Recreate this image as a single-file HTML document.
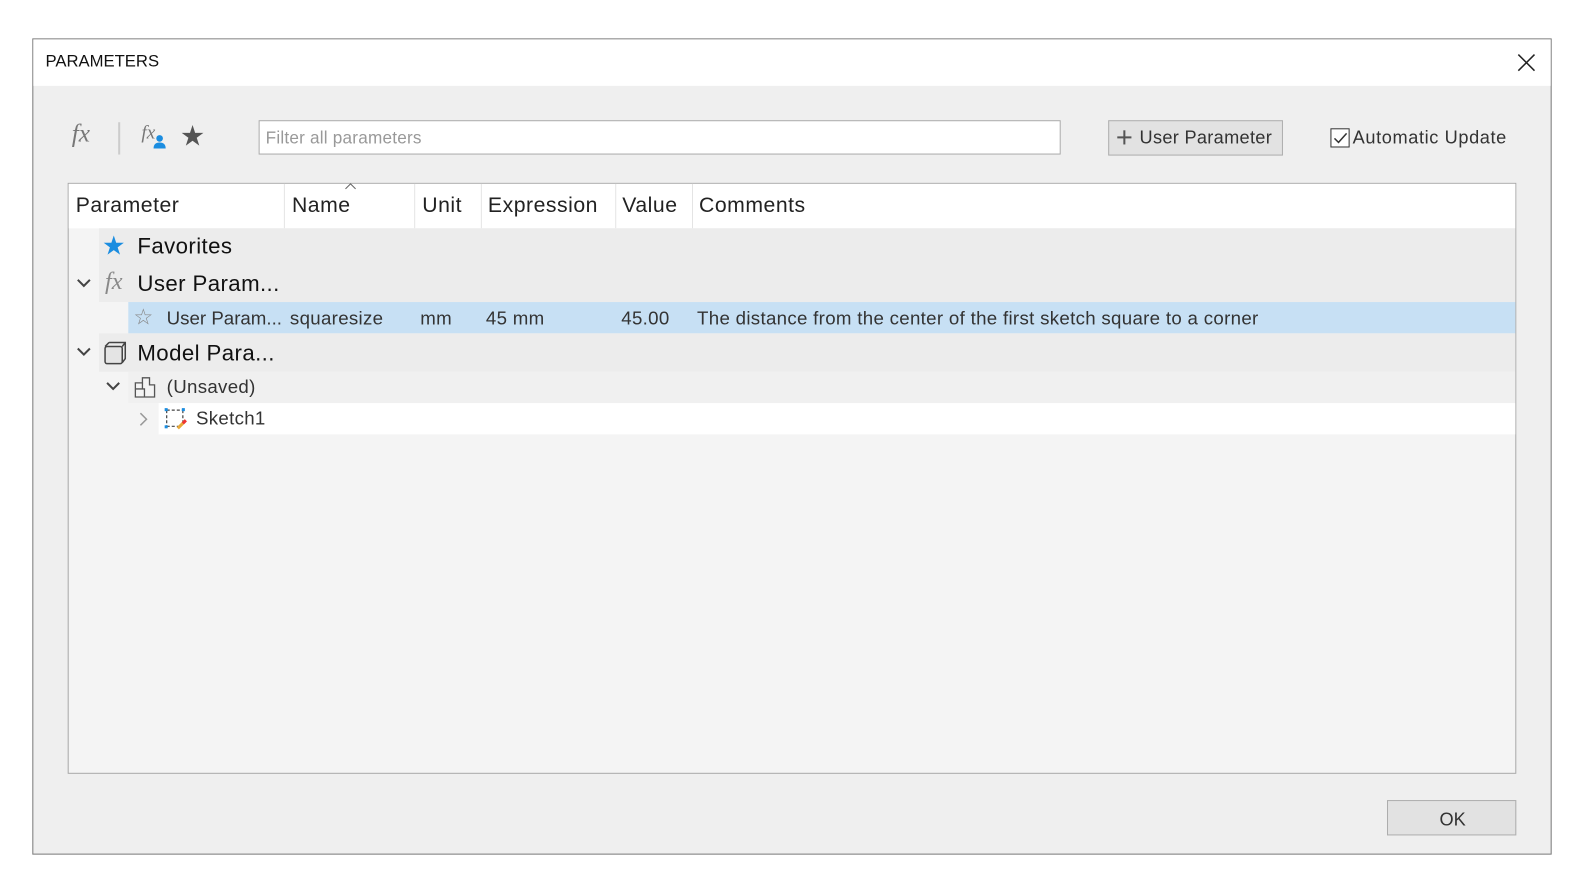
<!DOCTYPE html>
<html><head><style>
*{box-sizing:border-box;margin:0;padding:0}
html,body{width:1584px;height:886px;overflow:hidden;background:#fff}
#w{position:relative;width:1584px;height:886px;overflow:hidden;font-family:"Liberation Sans","DejaVu Sans",sans-serif;color:#222;transform:scale(1.0102);transform-origin:0 0}
.a{position:absolute}
.dlg{left:32px;top:38px;width:1504px;height:808px;border:1px solid #7a7a7a;background:#efefef}
.title{left:0;top:0;width:1502px;height:46px;background:#fff}
.t{font-size:18px;white-space:nowrap}
.h{font-size:21px;letter-spacing:.5px;top:192px}
.r{font-size:18.5px;letter-spacing:.3px;top:304px;color:#333}
.g{font-size:22px;letter-spacing:.4px;color:#111}
</style></head><body><div id="w">
<div class="a dlg">
 <div class="a title"></div>
</div>
<div class="a t" style="left:45px;top:52px;font-size:16.5px;color:#111">PARAMETERS</div>
<svg class="a" style="left:1500px;top:51px" width="22" height="22"><path d="M3 3L19 19M19 3L3 19" stroke="#222" stroke-width="1.5"/></svg>

<div class="a" style="left:71px;top:119px;font-family:'Liberation Serif',serif;font-style:italic;font-size:25px;color:#777">fx</div>
<div class="a" style="left:117px;top:121px;width:2px;height:32px;background:#ccc"></div>
<div class="a" style="left:140px;top:121px;font-family:'Liberation Serif',serif;font-style:italic;font-size:19px;color:#777">fx</div>
<svg class="a" style="left:150px;top:132px" width="16" height="16"><circle cx="8" cy="5" r="3.3" fill="#1b8de0"/><path d="M2 15Q2 9 8 9Q14 9 14 15Z" fill="#1b8de0"/></svg>
<div class="a" style="left:178px;top:118px;font-size:28px;color:#555">★</div>
<div class="a" style="left:256px;top:119px;width:794px;height:34px;background:#fff;border:1px solid #aaa"></div>
<div class="a t" style="left:263px;top:127px;color:#999;font-size:17px;letter-spacing:.2px">Filter all parameters</div>
<div class="a" style="left:1097px;top:119px;width:173px;height:35px;background:#e2e2e2;border:1px solid #adadad"></div>
<div class="a" style="left:1106px;top:135px;width:14px;height:2px;background:#555"></div>
<div class="a" style="left:1112px;top:129px;width:2px;height:14px;background:#555"></div>
<div class="a t" style="left:1128px;top:126px;color:#333;letter-spacing:.3px">User Parameter</div>
<div class="a" style="left:1317px;top:127px;width:19px;height:19px;border:1.5px solid #333;background:#fff"></div>
<svg class="a" style="left:1318px;top:128px" width="18" height="18"><path d="M3 9L7 13L15 4" stroke="#333" stroke-width="1.5" fill="none"/></svg>
<div class="a t" style="left:1339px;top:126px;color:#333;letter-spacing:.6px">Automatic Update</div>

<div class="a" style="left:67px;top:181px;width:1434px;height:585px;border:1px solid #a8a8a8;background:#f4f4f4"></div>
<div class="a" style="left:68px;top:182px;width:1432px;height:44px;background:#fff"></div>
<div class="a" style="left:281px;top:182px;width:1px;height:44px;background:#e4e4e4"></div>
<div class="a" style="left:410px;top:182px;width:1px;height:44px;background:#e4e4e4"></div>
<div class="a" style="left:476px;top:182px;width:1px;height:44px;background:#e4e4e4"></div>
<div class="a" style="left:609px;top:182px;width:1px;height:44px;background:#e4e4e4"></div>
<div class="a" style="left:685px;top:182px;width:1px;height:44px;background:#e4e4e4"></div>
<svg class="a" style="left:340px;top:180px" width="14" height="8"><path d="M2 7L7 2L12 7" stroke="#666" fill="none"/></svg>
<div class="a t h" style="left:75px">Parameter</div>
<div class="a t h" style="left:289px">Name</div>
<div class="a t h" style="left:418px">Unit</div>
<div class="a t h" style="left:483px">Expression</div>
<div class="a t h" style="left:616px">Value</div>
<div class="a t h" style="left:692px">Comments</div>

<div class="a" style="left:98px;top:226px;width:1402px;height:73px;background:#ececec"></div>
<div class="a" style="left:127px;top:299px;width:1373px;height:31px;background:#c7e0f4"></div>
<div class="a" style="left:98px;top:330px;width:1402px;height:38px;background:#ececec"></div>
<div class="a" style="left:127px;top:368px;width:1373px;height:31px;background:#f0f0f0"></div>
<div class="a" style="left:157px;top:399px;width:1343px;height:31px;background:#fff"></div>

<div class="a" style="left:101px;top:228px;font-size:26px;color:#1b8de0">★</div>
<div class="a t g" style="left:136px;top:231px">Favorites</div>
<svg class="a" style="left:75px;top:274px" width="16" height="12"><path d="M2 3L8 9L14 3" stroke="#444" stroke-width="2" fill="none"/></svg>
<div class="a" style="left:104px;top:266px;font-family:'Liberation Serif',serif;font-style:italic;font-size:24px;color:#888">fx</div>
<div class="a t g" style="left:136px;top:268px">User Param...</div>
<div class="a" style="left:132px;top:301px;font-size:22px;color:#888">☆</div>
<div class="a t r" style="left:165px;letter-spacing:0">User Param...</div>
<div class="a t r" style="left:287px">squaresize</div>
<div class="a t r" style="left:416px">mm</div>
<div class="a t r" style="left:481px">45 mm</div>
<div class="a t r" style="left:615px">45.00</div>
<div class="a t r" style="left:690px">The distance from the center of the first sketch square to a corner</div>

<svg class="a" style="left:75px;top:342px" width="16" height="12"><path d="M2 3L8 9L14 3" stroke="#444" stroke-width="2" fill="none"/></svg>
<svg class="a" style="left:102px;top:337px" width="26" height="26"><rect x="2" y="6" width="17" height="17" rx="2" fill="#e4e4e4" stroke="#444" stroke-width="1.5"/><path d="M6 2H22V18L19 22M2 6L6 2M19 6L22 2" stroke="#444" stroke-width="1.5" fill="none"/></svg>
<div class="a t g" style="left:136px;top:337px">Model Para...</div>
<svg class="a" style="left:104px;top:376px" width="16" height="12"><path d="M2 3L8 9L14 3" stroke="#444" stroke-width="2" fill="none"/></svg>
<svg class="a" style="left:131px;top:371px" width="26" height="24"><path d="M3 8H10V3H17V10H22V22H3Z" fill="#f4f4f4" stroke="#555" stroke-width="1.3"/><path d="M3 14H12V22M10 8V14" stroke="#555" stroke-width="1.3" fill="none"/></svg>
<div class="a t r" style="left:165px;top:372px">(Unsaved)</div>
<svg class="a" style="left:136px;top:407px" width="12" height="16"><path d="M3 2L9 8L3 14" stroke="#999" stroke-width="1.5" fill="none"/></svg>
<svg class="a" style="left:161px;top:402px" width="26" height="26"><path d="M4 4H20M4 4V20M4 20H18M20 4V16" stroke="#444" stroke-width="1.2" stroke-dasharray="3 2" fill="none"/><rect x="2" y="2" width="3" height="3" fill="#1b8de0"/><rect x="19" y="2" width="3" height="3" fill="#1b8de0"/><rect x="2" y="19" width="3" height="3" fill="#1b8de0"/><path d="M15 22L22 15" stroke="#e8a93a" stroke-width="3"/><path d="M20 17L23 14" stroke="#e33" stroke-width="3"/></svg>
<div class="a t r" style="left:194px;top:403px">Sketch1</div>

<div class="a" style="left:1373px;top:792px;width:128px;height:35px;background:#e2e2e2;border:1px solid #adadad"></div>
<div class="a t" style="left:1425px;top:801px;font-size:18px;color:#333">OK</div>
</div></body></html>
